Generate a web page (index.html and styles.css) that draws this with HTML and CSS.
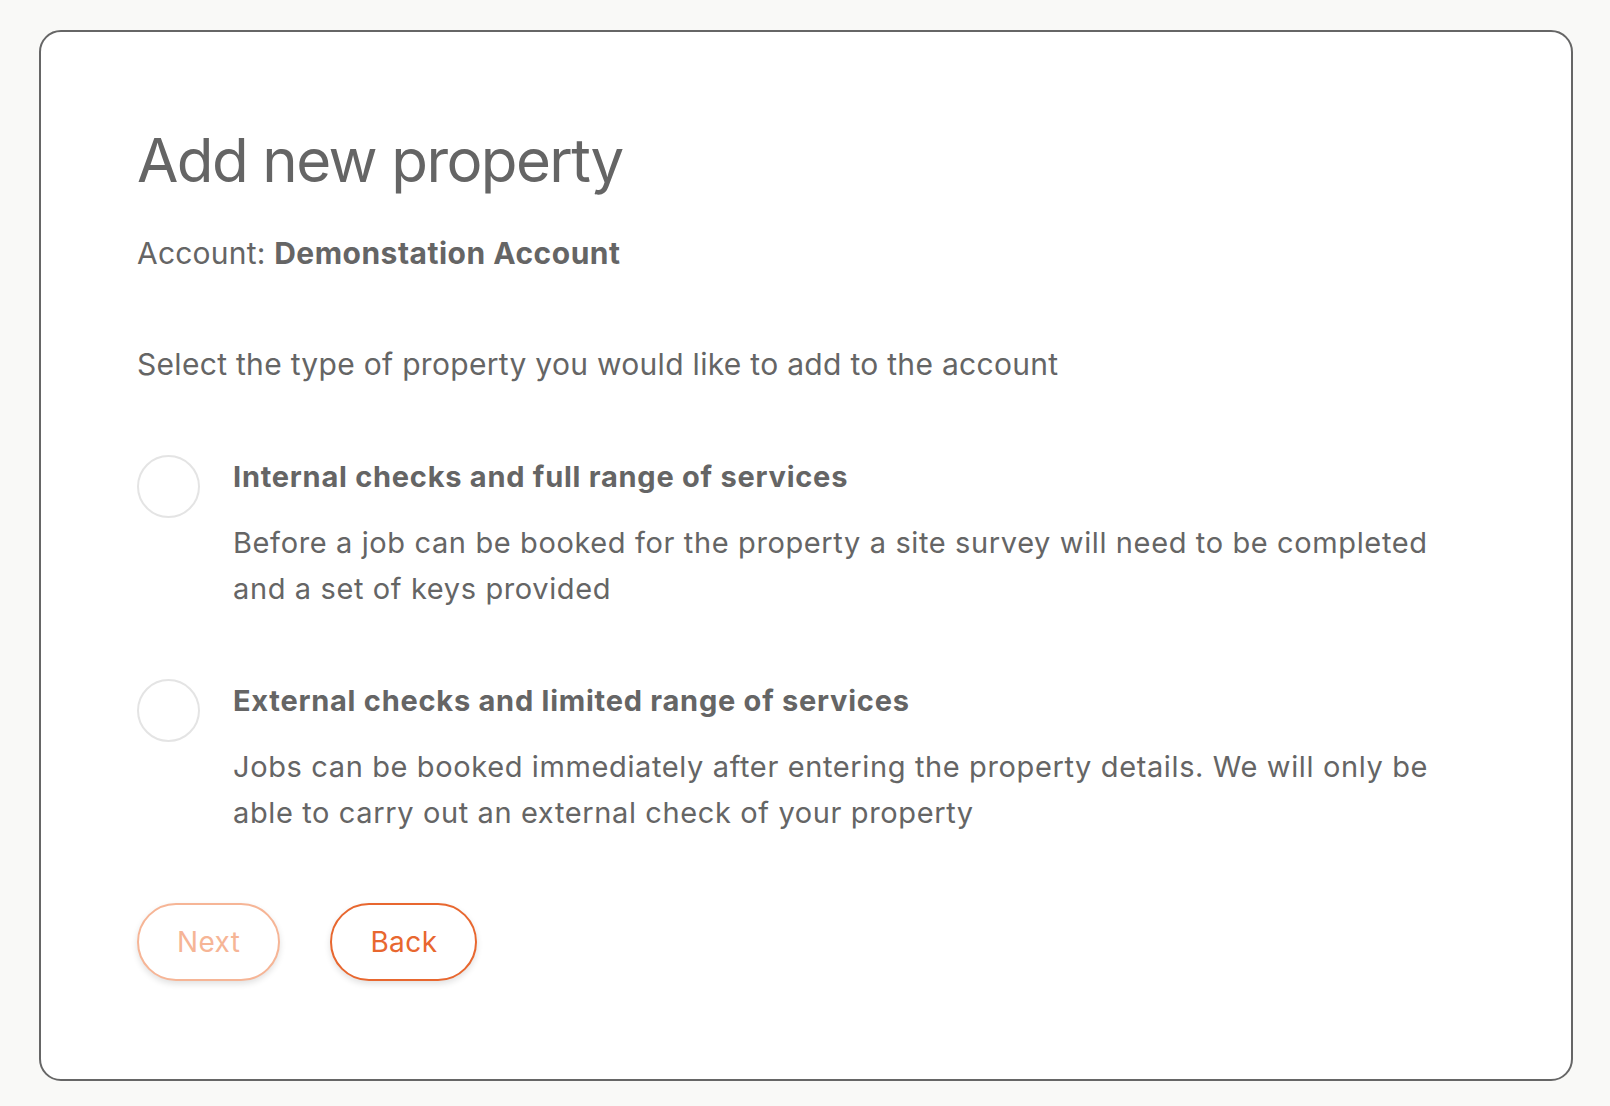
FILE: index.html
```html
<!DOCTYPE html>
<html lang="en">
<head>
<meta charset="utf-8">
<title>Add new property</title>
<link rel="stylesheet" href="styles.css">
</head>
<body>
<main class="page">
  <section class="card">
    <h1 class="title">Add new property</h1>
    <p class="account">Account: <strong>Demonstation Account</strong></p>
    <p class="intro">Select the type of property you would like to add to the account</p>
    <div class="options">
      <label class="option">
        <span class="radio"></span>
        <span class="option-text">
          <span class="option-title">Internal checks and full range of services</span>
          <span class="option-desc">Before a job can be booked for the property a site survey will need to be completed and a set of keys provided</span>
        </span>
      </label>
      <label class="option">
        <span class="radio"></span>
        <span class="option-text">
          <span class="option-title">External checks and limited range of services</span>
          <span class="option-desc">Jobs can be booked immediately after entering the property details. We will only be able to carry out an external check of your property</span>
        </span>
      </label>
    </div>
    <div class="actions">
      <button class="btn btn-disabled" type="button">Next</button>
      <button class="btn btn-primary" type="button">Back</button>
    </div>
  </section>
</main>
</body>
</html>
```

FILE: styles.css
```css
html, body {
  margin: 0;
  padding: 0;
  background: #f9f9f7;
}

body {
  font-family: Inter, "Liberation Sans", Arial, sans-serif;
  color: #656565;
}

.page {
  padding: 30px 37px 26px 39px;
}

.card {
  background: #ffffff;
  border: 2px solid #666666;
  border-radius: 22px;
  padding: 91px 96px 98px 96px;
}

.title {
  margin: 0;
  font-size: 60px;
  line-height: 74px;
  font-weight: 400;
  color: #656565;
  letter-spacing: -1.6px;
}

.account {
  margin: 36px 0 0;
  font-size: 30px;
  line-height: 40px;
  letter-spacing: 0.2px;
}

.account strong {
  font-weight: 700;
  letter-spacing: 0.5px;
}

.intro {
  margin: 71px 0 0;
  font-size: 30px;
  line-height: 40px;
  letter-spacing: 0.3px;
}

.options {
  margin-top: 71px;
  display: flex;
  flex-direction: column;
  gap: 67px;
}

.option {
  display: flex;
  align-items: flex-start;
  gap: 33px;
  max-width: 1336px;
}

.radio {
  flex: none;
  width: 59px;
  height: 59px;
  border: 2px solid #e4e4e4;
  border-radius: 50%;
  background: #fff;
}

.option-text {
  display: flex;
  flex-direction: column;
  padding-top: 2px;
}

.option-title {
  font-size: 29px;
  line-height: 40px;
  font-weight: 700;
  letter-spacing: 0.75px;
}

.option-desc {
  margin-top: 23px;
  font-size: 29px;
  line-height: 46px;
  letter-spacing: 0.62px;
}

.actions {
  margin-top: 67px;
  display: flex;
  gap: 50px;
}

.btn {
  height: 78px;
  padding: 0 38px;
  border-radius: 40px;
  background: #fff;
  font-family: inherit;
  font-size: 28px;
  letter-spacing: 0.4px;
  border: 2px solid #e8672f;
  color: #e8672f;
  box-shadow: 0 3px 6px rgba(0, 0, 0, 0.12);
  cursor: pointer;
}

.btn-disabled {
  border-color: #f6b596;
  color: #f6b596;
}
```
